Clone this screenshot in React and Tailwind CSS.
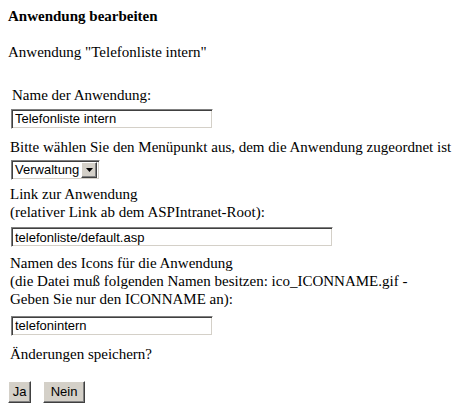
import { useState } from "react";

// Formular "Anwendung bearbeiten" im alten Windows-Look
const sunken =
  "border border-t-[#808080] border-l-[#808080] border-b-white border-r-white shadow-[inset_1px_1px_0_#404040,inset_-1px_-1px_0_#d4d0c8] bg-white";

const raised =
  "border border-t-white border-l-white border-b-[#404040] border-r-[#404040] shadow-[inset_-1px_-1px_0_#808080,inset_1px_1px_0_#d4d0c8] bg-[#d4d0c8]";

function TextInput({ value, onChange, width }) {
  return (
    <input
      type="text"
      value={value}
      onChange={(e) => onChange(e.target.value)}
      className={`${sunken} ${width} h-[20px] px-[3px] text-[13px] leading-[16px] text-black outline-none font-['Liberation_Sans',Arial,sans-serif]`}
    />
  );
}

function Line({ children, className = "" }) {
  return <div className={`h-[18px] leading-[18px] whitespace-nowrap ${className}`}>{children}</div>;
}

export default function App() {
  const [name, setName] = useState("Telefonliste intern");
  const [link, setLink] = useState("telefonliste/default.asp");
  const [icon, setIcon] = useState("telefonintern");

  return (
    <div className="w-[464px] h-[419px] bg-white text-black text-[15px] font-['Liberation_Serif','Times_New_Roman',serif] pt-[7px] px-[8px]">
      <Line className="font-bold">Anwendung bearbeiten</Line>
      <Line className="mt-[18px]">Anwendung "Telefonliste intern"</Line>

      <div className="pl-[2px] flex flex-col items-start">
        <Line className="mt-[25px] pl-[2px]">Name der Anwendung:</Line>
        <div className="mt-[3px] pl-[1px]">
          <TextInput value={name} onChange={setName} width="w-[202px]" />
        </div>

        <Line className="mt-[8px]">Bitte wählen Sie den Menüpunkt aus, dem die Anwendung zugeordnet ist</Line>
        <div className={`${sunken} mt-[4px] ml-[1px] h-[20px] w-[89px] flex items-center justify-between pl-[3px] pr-[2px] text-[13px] font-['Liberation_Sans',Arial,sans-serif]`}>
          <span>Verwaltung</span>
          <div className={`${raised} w-[16px] h-[16px] flex items-center justify-center`}>
            <svg width="7" height="4" viewBox="0 0 7 4">
              <path d="M0 0h7L3.5 4z" fill="#000" />
            </svg>
          </div>
        </div>

        <Line className="mt-[5px]">Link zur Anwendung</Line>
        <Line>(relativer Link ab dem ASPIntranet-Root):</Line>
        <div className="mt-[5px] pl-[1px]">
          <TextInput value={link} onChange={setLink} width="w-[322px]" />
        </div>

        <Line className="mt-[6px]">Namen des Icons für die Anwendung</Line>
        <Line>(die Datei muß folgenden Namen besitzen: ico_ICONNAME.gif -</Line>
        <Line>Geben Sie nur den ICONNAME an):</Line>
        <div className="mt-[6px] pl-[1px]">
          <TextInput value={icon} onChange={setIcon} width="w-[202px]" />
        </div>

        <Line className="mt-[8px]">Änderungen speichern?</Line>
      </div>

      <div className="mt-[18px] flex gap-[12px]">
        <button className={`${raised} w-[23px] h-[22px] text-[13px] font-['Liberation_Sans',Arial,sans-serif] leading-none`}>Ja</button>
        <button className={`${raised} w-[42px] h-[22px] text-[13px] font-['Liberation_Sans',Arial,sans-serif] leading-none`}>Nein</button>
      </div>
    </div>
  );
}
